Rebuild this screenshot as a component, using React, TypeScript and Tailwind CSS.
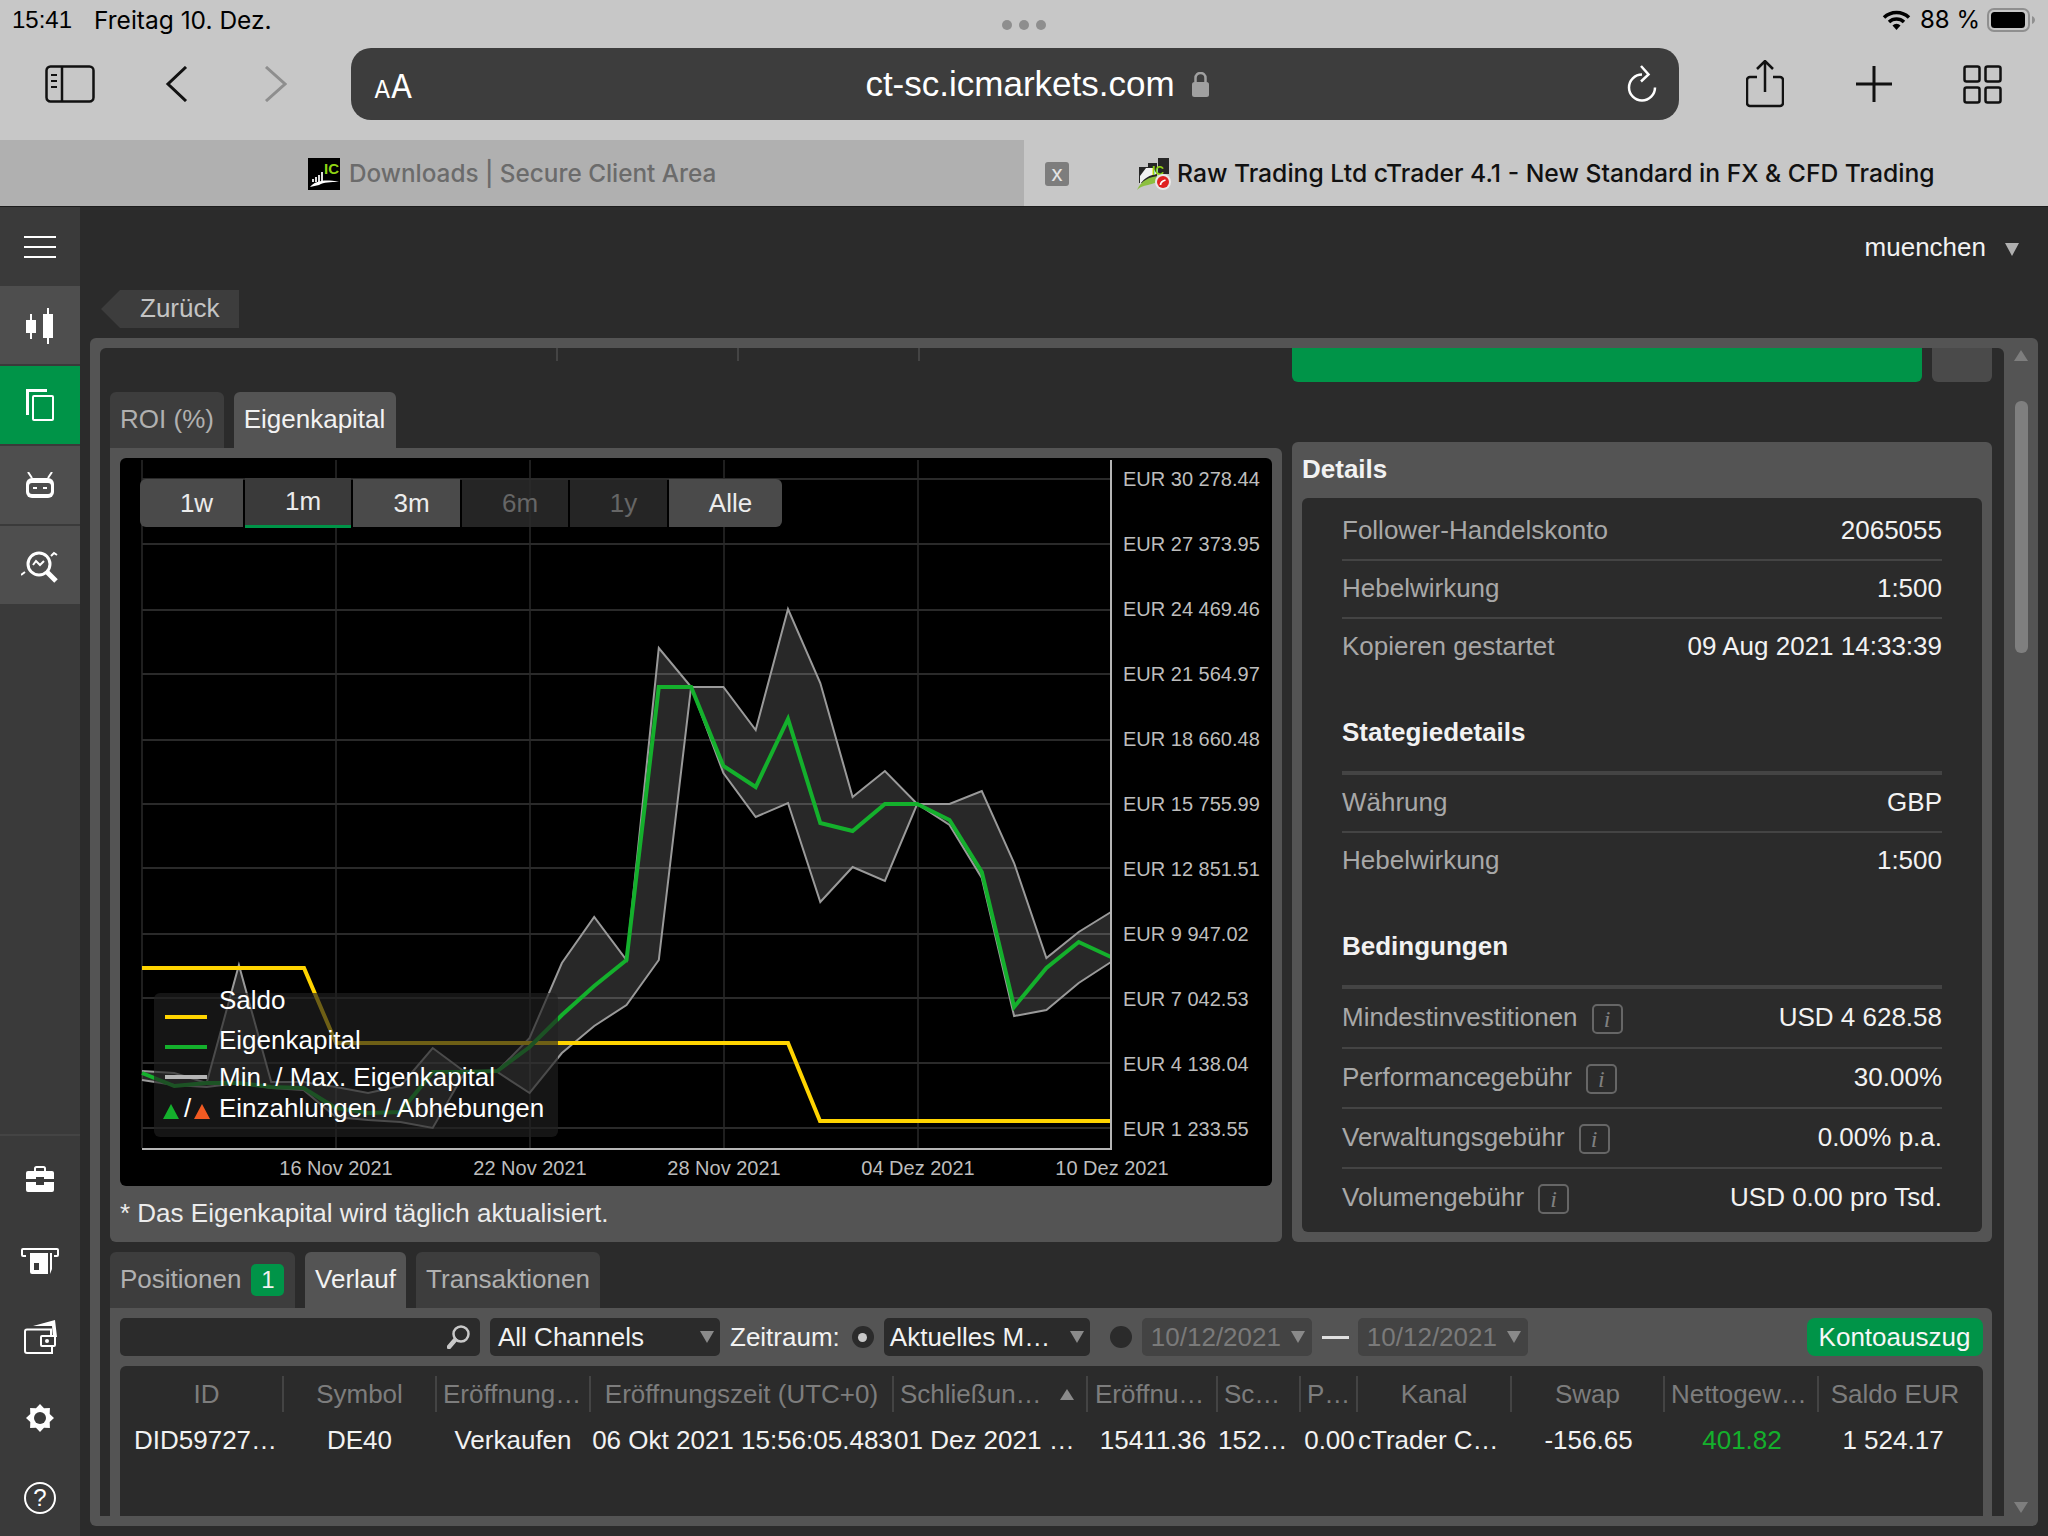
import React from 'react';

const CHROME = { fontFamily: 'Inter, "Liberation Sans", sans-serif' };
const PAGE = { fontFamily: '"Liberation Sans", Arial, sans-serif' };

const equity = [1073, 1086, 1083, 1083, 1087, 1088, 1108, 1113, 1112, 1072, 1072, 1071, 1047, 1015, 986, 960, 687, 687, 766, 787, 719, 823, 831, 804, 804, 820, 872, 1007, 968, 942, 957];
const maxEq = [1071, 1073, 1083, 965, 1082, 1082, 1087, 1093, 1086, 1048, 1072, 1071, 1038, 963, 917, 960, 648, 687, 687, 730, 609, 683, 797, 771, 804, 804, 791, 863, 958, 932, 912];
const minEq = [1080, 1085, 1087, 1083, 1088, 1090, 1117, 1120, 1122, 1128, 1072, 1072, 1093, 1053, 1026, 1005, 960, 687, 773, 817, 803, 902, 867, 881, 804, 825, 878, 1016, 1010, 983, 962];

const px = (k: number) => 142 + 32.3 * k;
const line = (ys: number[]) => ys.map((y, k) => `${px(k)},${y}`).join(' ');
const band = line(maxEq) + ' ' + minEq.map((y, k) => `${px(k)},${y}`).reverse().join(' ');

const gridY = [479, 544, 610, 674, 740, 804, 868, 934, 998, 1063, 1128];
const gridX = [142, 336, 530, 724, 918];

const yLabels = ['EUR 30 278.44', 'EUR 27 373.95', 'EUR 24 469.46', 'EUR 21 564.97', 'EUR 18 660.48', 'EUR 15 755.99', 'EUR 12 851.51', 'EUR 9 947.02', 'EUR 7 042.53', 'EUR 4 138.04', 'EUR 1 233.55'];
const xLabels = ['16 Nov 2021', '22 Nov 2021', '28 Nov 2021', '04 Dez 2021', '10 Dez 2021'];

const ranges = [
  { label: '1w', w: 'w-[103px]', cls: 'bg-[#4a4a4a] text-[#ececec] rounded-l-md' },
  { label: '1m', w: 'w-[106px]', cls: 'bg-[#3a3a3a] text-[#ececec] border-b-[3px] border-[#009448] h-[50px] -mt-[1px]' },
  { label: '3m', w: 'w-[107px]', cls: 'bg-[#4a4a4a] text-[#ececec]' },
  { label: '6m', w: 'w-[106px]', cls: 'bg-[#2b2b2b]/85 text-[#666666]' },
  { label: '1y', w: 'w-[97px]', cls: 'bg-[#2b2b2b]/85 text-[#666666]' },
  { label: 'Alle', w: 'w-[113px]', cls: 'bg-[#4a4a4a] text-[#ececec] rounded-r-md' },
];

const columns = 'grid grid-cols-[153px_153px_154px_303px_194px_130px_83px_57px_154px_153px_154px_154px]';

const headers = [
  { t: 'ID' },
  { t: 'Symbol' },
  { t: 'Eröffnung…', left: 'pl-[6px]' },
  { t: 'Eröffnungszeit (UTC+0)' },
  { t: 'Schließun…', left: 'pl-[6px]', sort: true },
  { t: 'Eröffnu…', left: 'pl-[7px]' },
  { t: 'Sc…', left: 'pl-[6px]' },
  { t: 'P…', left: 'pl-[6px]' },
  { t: 'Kanal' },
  { t: 'Swap' },
  { t: 'Nettogew…', left: 'pl-[6px]' },
  { t: 'Saldo EUR', cls: 'pr-[2px]' },
];

const cells = [
  { t: 'DID59727…', left: 'pl-[3px]' },
  { t: 'DE40', cls: 'pr-[2px]' },
  { t: 'Verkaufen', cls: 'pr-[2px]' },
  { t: '06 Okt 2021 15:56:05.483' },
  { t: '01 Dez 2021 …', left: 'pl-0' },
  { t: '15411.36' },
  { t: '152…', left: 'pl-0' },
  { t: '0.00' },
  { t: 'cTrader C…', left: 'pl-0' },
  { t: '-156.65' },
  { t: '401.82', cls: 'text-[#14b02c]' },
  { t: '1 524.17', cls: 'pr-[6px]' },
];

function Caret({ color = 'border-t-[#8a8a8a]' }: { color?: string }) {
  return <span className={`block h-0 w-0 border-x-[7px] border-t-[12px] border-x-transparent ${color}`} />;
}

function InfoBox() {
  return (
    <span className="ml-[14px] mt-[3px] flex h-[30px] w-[31px] items-center justify-center rounded-[5px] border-2 border-[#666666] text-[24px] italic text-[#808080]" style={{ fontFamily: '"Liberation Serif", serif' }}>
      i
    </span>
  );
}

function Row({ label, value, info, tall, last }: { label: string; value: string; info?: boolean; tall?: boolean; last?: boolean }) {
  return (
    <div className={`flex items-center justify-between ${tall ? 'h-[58px]' : 'h-[56px]'} ${last ? '' : 'box-content border-b-2 border-[#444444]'}`}>
      <span className="flex -translate-y-[1px] items-center text-[#a8a8a8]">
        {label}
        {info && <InfoBox />}
      </span>
      <span className="-translate-y-[1px] text-[#f2f2f2]">{value}</span>
    </div>
  );
}

function SidebarToggleIcon() {
  return (
    <svg width="50" height="38" viewBox="0 0 50 38" fill="none" stroke="#111" strokeWidth="2.5">
      <rect x="1.5" y="1.5" width="47" height="35" rx="4" />
      <path d="M17 1.5v35" />
      <path d="M6 10h6M6 16h6M6 22h6" strokeWidth="2" />
    </svg>
  );
}

function CandlesIcon() {
  return (
    <svg width="28" height="36" viewBox="0 0 28 36" fill="#fff" className="mt-[2px]">
      <rect x="0" y="12" width="10" height="13" />
      <rect x="4" y="6" width="2" height="25" />
      <rect x="17" y="6" width="10" height="24" />
      <rect x="21" y="0" width="2" height="36" />
    </svg>
  );
}

function CopyIcon() {
  return (
    <svg width="28" height="32" viewBox="0 0 28 32" fill="none" stroke="#fff">
      <path d="M1.5 26V1.5H21" strokeWidth="3" />
      <rect x="7" y="7" width="20" height="24" strokeWidth="2" rx="1" />
    </svg>
  );
}

function RobotIcon() {
  return (
    <svg width="28" height="26" viewBox="0 0 28 26">
      <path d="M2 0l4 6M26 0l-4 6" stroke="#fff" strokeWidth="2" />
      <rect x="0" y="6" width="28" height="20" rx="6" fill="#fff" />
      <rect x="3" y="11" width="22" height="11" rx="3" fill="#4e4e4e" />
      <path d="M7 16h4M17 16h4" stroke="#fff" strokeWidth="2" />
    </svg>
  );
}

function ChartSearchIcon() {
  return (
    <svg width="38" height="32" viewBox="0 0 38 32" fill="none" stroke="#fff" className="mt-[4px]">
      <circle cx="18" cy="13" r="11" strokeWidth="3" />
      <path d="M12 14l3-4 4 4 4-4" strokeWidth="2" />
      <path d="M26 21l9 9" strokeWidth="5" />
      <path d="M0 24l4-3M30 5l3-3 3 2" strokeWidth="2" />
    </svg>
  );
}

function BriefcaseIcon() {
  return (
    <svg width="28" height="26" viewBox="0 0 28 26" fill="#fff">
      <path d="M9 5V2.500A1.500 1.500 0 0 1 10.500 1h7A1.500 1.500 0 0 1 19 2.500V5" fill="none" stroke="#fff" strokeWidth="2" />
      <path d="M2 5h24a2 2 0 0 1 2 2v6H18v-2h-8v2H0V7a2 2 0 0 1 2-2z" />
      <path d="M0 16h10v3h8v-3h10v8a2 2 0 0 1-2 2H2a2 2 0 0 1-2-2z" />
    </svg>
  );
}

function AtmIcon() {
  return (
    <svg width="38" height="26" viewBox="0 0 38 26">
      <path d="M5 8H2a1 1 0 0 1-1-1V2a1 1 0 0 1 1-1h34a1 1 0 0 1 1 1v5a1 1 0 0 1-1 1h-3" fill="none" stroke="#fff" strokeWidth="2" />
      <path d="M9 5h18v21H11a2 2 0 0 1-2-2z" fill="#fff" />
      <rect x="13" y="15" width="5" height="7" fill="#3a3a3a" />
      <path d="M29 5h2v16l-2 5z" fill="#fff" />
    </svg>
  );
}

function WalletIcon() {
  return (
    <svg width="33" height="34" viewBox="0 0 33 34" fill="none">
      <path d="M9 6L31 0l2 17h-4l-1-11z" fill="#fff" />
      <path d="M27 15V9.500H3A2 2 0 0 0 1 11.500V31a2 2 0 0 0 2 2h25v-7" stroke="#fff" strokeWidth="2" />
      <rect x="17" y="16" width="14" height="10" rx="1" stroke="#fff" strokeWidth="2" />
      <circle cx="23" cy="21" r="2" fill="#fff" />
    </svg>
  );
}

const gearPoints = Array.from({ length: 16 }, (_, i) => {
  const r = i % 2 === 0 ? 14 : 10.5;
  const a = (i * Math.PI) / 8 - Math.PI / 2;
  return `${14 + r * Math.cos(a)},${14 + r * Math.sin(a)}`;
}).join(' ');

function GearIcon() {
  return (
    <svg width="28" height="28" viewBox="0 0 28 28">
      <polygon points={gearPoints} fill="#fff" />
      <circle cx="14" cy="14" r="6" fill="#3a3a3a" />
    </svg>
  );
}

function WifiIcon() {
  return (
    <svg width="29" height="20" viewBox="0 0 29 20" fill="none" stroke="#000" strokeWidth="3.500">
      <path d="M2 7.500a18 18 0 0 1 25 0" />
      <path d="M7 12a11 11 0 0 1 15 0" />
      <path d="M14.500 20l-4-4.500a5.500 5.500 0 0 1 8 0z" fill="#000" stroke="none" />
    </svg>
  );
}

function Battery() {
  return (
    <svg width="48" height="24" viewBox="0 0 48 24">
      <rect x="1" y="1" width="41" height="22" rx="6" fill="none" stroke="#8f8f8f" strokeWidth="2" />
      <rect x="4" y="4" width="34" height="16" rx="3.500" fill="#000" />
      <path d="M45 8c2 1 3 2.500 3 4s-1 3-3 4z" fill="#8f8f8f" />
    </svg>
  );
}

function IcFavicon() {
  return (
    <svg width="32" height="32" viewBox="0 0 32 32">
      <rect width="32" height="32" fill="#000" />
      <path d="M4 21h2v3H4zM7 19h2v5H7zM10 17h2v7h-2zM13 14h2v9h-2z" fill="#ddd" />
      <path d="M2 29c5-6 14-8 29-5-9 0-15 0-20 3z" fill="#fff" />
      <text x="16" y="16" fontSize="15" fontWeight="700" fill="#8fd414" style={PAGE}>IC</text>
    </svg>
  );
}

function TraderFavicon() {
  return (
    <svg width="34" height="32" viewBox="0 0 34 32">
      <path d="M2 9h9v16H2zM11 5h9v16h-9zM21 0h11v16H21z" fill="#262626" />
      <path d="M0 32c4-9 12-14 24-14 0 6-9 8-13 9-5 1-8 2-11 5z" fill="#8cbf3f" />
      <path d="M3 26c5-6 9-9 17-10l-4-6H9l-6 8z" fill="#f2f2f2" />
      <text x="15" y="17" fontSize="12" fontWeight="700" fill="#8fd414" style={PAGE}>IC</text>
      <circle cx="26" cy="24" r="8" fill="#e8e8e8" />
      <circle cx="26" cy="24" r="6" fill="#e02020" />
      <path d="M23.500 27c0-2.500 1.500-4 5-5" stroke="#fff" strokeWidth="1.800" fill="none" />
    </svg>
  );
}

function Chart() {
  return (
    <div className="relative flex h-[728px] w-[1152px] rounded-md bg-black">
      <div className="relative w-[992px]">
        <svg width="992" height="692" viewBox="120 458 992 692" className="block" fill="none">
          {gridY.map((y) => (
            <line key={y} x1="142" x2="1111" y1={y} y2={y} stroke="#2a2a2a" strokeWidth="2" />
          ))}
          {gridX.map((x) => (
            <line key={x} x1={x} x2={x} y1="460" y2="1148" stroke="#2a2a2a" strokeWidth="1.500" />
          ))}
          <polygon points={band} fill="#ffffff" fillOpacity="0.155" />
          <polyline points={line(maxEq)} stroke="#9a9a9a" strokeWidth="2" />
          <polyline points={line(minEq)} stroke="#9a9a9a" strokeWidth="2" />
          <polyline points="142,968 304,968 336,1043 788,1043 820,1121 1111,1121" stroke="#ffd400" strokeWidth="4" />
          <polyline points={line(equity)} stroke="#14b02c" strokeWidth="4" />
          <line x1="142" x2="1112" y1="1149" y2="1149" stroke="#b5b5b5" strokeWidth="2" />
          <line x1="1111" x2="1111" y1="460" y2="1150" stroke="#b5b5b5" strokeWidth="2" />
        </svg>

        <div className="flex pl-[119px] text-[20px] leading-[36px] text-[#bdbdbd]">
          {xLabels.map((l) => (
            <span key={l} className="w-[194px] shrink-0 whitespace-nowrap text-center">{l}</span>
          ))}
        </div>

        <div className="absolute left-[20px] top-[21px] flex items-start gap-[2px] text-[26px]">
          {ranges.map((r) => (
            <span key={r.label} className={`flex h-[48px] items-center justify-center pl-[10px] ${r.w} ${r.cls}`}>{r.label}</span>
          ))}
        </div>

        <div className="absolute left-[34px] top-[535px] flex h-[144px] w-[404px] flex-col rounded-md bg-[#202020]/65 text-[26px] leading-[30px] text-white">
          <div className="-mt-[8px] flex h-[30px] items-center pl-[11px]">
            <span className="h-[4px] w-[42px] translate-y-[17px] bg-[#ffd400]" />
            <span className="ml-[12px]">Saldo</span>
          </div>
          <div className="mt-[10px] flex h-[30px] items-center pl-[11px]">
            <span className="h-[4px] w-[42px] translate-y-[7px] bg-[#14b02c]" />
            <span className="ml-[12px]">Eigenkapital</span>
          </div>
          <div className="mt-[7px] flex h-[30px] items-center pl-[11px]">
            <span className="h-[4px] w-[42px] bg-[#b5b5b5]" />
            <span className="ml-[12px]">Min. / Max. Eigenkapital</span>
          </div>
          <div className="mt-[1px] flex h-[30px] items-center pl-[9px]">
            <span className="flex w-[56px] items-center">
              <span className="block h-0 w-0 translate-y-[3px] border-x-[8px] border-b-[15px] border-x-transparent border-b-[#14b02c]" />
              <span className="ml-[5px] mr-[3px] w-[7px]">/</span>
              <span className="block h-0 w-0 translate-y-[3px] border-x-[8px] border-b-[15px] border-x-transparent border-b-[#f05a22]" />
            </span>
            <span>Einzahlungen / Abhebungen</span>
          </div>
        </div>
      </div>

      <div className="ml-[11px] flex h-[683px] flex-col justify-between pt-[9px] text-[20px] leading-[24px] text-[#bdbdbd]">
        {yLabels.map((l) => (
          <span key={l} className="whitespace-nowrap">{l}</span>
        ))}
      </div>
    </div>
  );
}

function Table() {
  return (
    <div className="ml-[10px] mt-[10px] h-[150px] w-[1863px] rounded-t-md bg-[#2b2b2b] pl-[11px] pt-[10px]">
      <div className={`${columns} h-[36px] text-[#7d7d7d]`}>
        {headers.map((h, i) => (
          <div key={i} className={`flex h-[36px] items-center whitespace-nowrap leading-none ${i < headers.length - 1 ? 'border-r-2 border-[#444444]' : ''} ${h.left ? `${h.left} justify-start` : 'justify-center'} ${h.cls ?? ''}`}>
            {h.t}
            {h.sort && <span className="ml-auto mr-[12px] h-0 w-0 border-x-[7px] border-b-[11px] border-x-transparent border-b-[#8a8a8a]" />}
          </div>
        ))}
      </div>
      <div className={`${columns} h-[56px] text-[#f2f2f2]`}>
        {cells.map((c, i) => (
          <div key={i} className={`flex items-center whitespace-nowrap ${c.left ? `${c.left} justify-start` : 'justify-center'} ${c.cls ?? ''}`}>
            {c.t}
          </div>
        ))}
      </div>
    </div>
  );
}

export default function App() {
  return (
    <div className="flex h-[1536px] w-[2048px] flex-col overflow-hidden bg-[#2b2b2b]" style={PAGE}>
      {/* Safari chrome */}
      <div className="h-[140px] bg-[#c7c7c7] text-black" style={CHROME}>
        <div className="grid h-[48px] grid-cols-3 text-[24px]">
          <div className="flex h-[40px] items-center pl-[12px]">
            <span style={PAGE}>15:41</span>
            <span className="ml-[22px] text-[24.5px]">Freitag 10. Dez.</span>
          </div>
          <div className="flex items-start justify-center gap-[7px] pt-[20px]">
            <span className="h-[10px] w-[10px] rounded-full bg-[#8e8e8e]" />
            <span className="h-[10px] w-[10px] rounded-full bg-[#8e8e8e]" />
            <span className="h-[10px] w-[10px] rounded-full bg-[#8e8e8e]" />
          </div>
          <div className="flex h-[40px] items-center justify-end pr-[13px]">
            <WifiIcon />
            <span className="ml-[9px]">88 %</span>
            <span className="ml-[7px]"><Battery /></span>
          </div>
        </div>
        <div className="flex h-[72px] items-center">
          <span className="ml-[45px]"><SidebarToggleIcon /></span>
          <svg className="ml-[70px]" width="24" height="36" viewBox="0 0 24 36" fill="none" stroke="#111" strokeWidth="3"><path d="M21 1L3 18l18 17" /></svg>
          <svg className="ml-[74px]" width="24" height="36" viewBox="0 0 24 36" fill="none" stroke="#8e8e8e" strokeWidth="3"><path d="M3 1l19 17L3 35" /></svg>
          <div className="relative ml-[64px] flex h-[72px] w-[1328px] items-center justify-center rounded-[20px] bg-[#3d3d3d] text-[35px] text-white">
            <span className="absolute left-[23px] top-[11px]"><span className="text-[24px]">A</span><span className="text-[32px]">A</span></span>
            <span className="ml-[44px]" style={PAGE}>ct-sc.icmarkets.com</span>
            <svg className="ml-[17px]" width="17" height="25" viewBox="0 0 17 25" fill="#a0a0a0">
              <path d="M3.500 10V6a5 5 0 0 1 10 0v4" fill="none" stroke="#a0a0a0" strokeWidth="2.500" />
              <rect x="0" y="10" width="17" height="15" rx="2.500" />
            </svg>
            <svg className="absolute right-[22px] top-[17px]" width="30" height="38" viewBox="0 0 30 38" fill="none" stroke="#fff" strokeWidth="2.500">
              <path d="M15 9.500A13 13 0 1 0 28 22.500" />
              <path d="M14 1l7.500 8.500L14 16.500" />
            </svg>
          </div>
          <svg className="ml-[67px]" width="38" height="48" viewBox="0 0 38 48" fill="none" stroke="#111" strokeWidth="2.500">
            <path d="M11 17H4a3 3 0 0 0-3 3v23a3 3 0 0 0 3 3h30a3 3 0 0 0 3-3V20a3 3 0 0 0-3-3h-7" />
            <path d="M19 32V2M11 9l8-8 8 8" />
          </svg>
          <svg className="ml-[72px]" width="36" height="36" viewBox="0 0 36 36" stroke="#111" strokeWidth="3"><path d="M18 0v36M0 18h36" /></svg>
          <svg className="ml-[71px]" width="39" height="39" viewBox="0 0 39 39" fill="none" stroke="#111" strokeWidth="2.500">
            <rect x="1.500" y="1.500" width="15" height="15" rx="2" />
            <rect x="22.500" y="1.500" width="15" height="15" rx="2" />
            <rect x="1.500" y="22.500" width="15" height="15" rx="2" />
            <rect x="22.500" y="22.500" width="15" height="15" rx="2" />
          </svg>
        </div>
      </div>

      <div className="flex h-[67px] border-b border-[#1d1d1d] font-medium" style={CHROME}>
        <div className="flex w-[1024px] items-center bg-[#b0b0b0] pl-[308px] pt-[1px] text-[24.3px] text-[#6b6b6b]">
          <IcFavicon />
          <span className="ml-[9px] whitespace-nowrap">Downloads | Secure Client Area</span>
        </div>
        <div className="flex flex-1 items-center bg-[#c7c7c7] pt-[1px] text-[24.7px] text-[#111111]">
          <span className="ml-[21px] flex h-[24px] w-[24px] items-center justify-center rounded-[3px] bg-[#7d7d7d] pb-[2px] text-[22px] font-normal leading-none text-[#e4e4e4]">x</span>
          <span className="ml-[68px]"><TraderFavicon /></span>
          <span className="ml-[6px] whitespace-nowrap">Raw Trading Ltd cTrader 4.1 - New Standard in FX &amp; CFD Trading</span>
        </div>
      </div>

      <div className="flex flex-1 text-[26px]">
        {/* left rail */}
        <aside className="flex h-[1329px] w-[80px] flex-col bg-[#3a3a3a]">
          <div className="flex h-[79px] flex-col items-center justify-center gap-[8px]">
            <span className="h-[2px] w-[32px] bg-white" />
            <span className="h-[2px] w-[32px] bg-white" />
            <span className="h-[2px] w-[32px] bg-white" />
          </div>
          <div className="flex flex-col gap-[2px]">
            <div className="flex h-[78px] items-center justify-center bg-[#4e4e4e]"><CandlesIcon /></div>
            <div className="flex h-[78px] items-center justify-center bg-[#009448]"><CopyIcon /></div>
            <div className="flex h-[78px] items-center justify-center bg-[#4e4e4e]"><RobotIcon /></div>
            <div className="flex h-[78px] items-center justify-center bg-[#4e4e4e]"><ChartSearchIcon /></div>
          </div>
          <div className="mt-auto h-[2px] bg-[#444444]" />
          <div className="flex h-[86px] items-center justify-center"><BriefcaseIcon /></div>
          <div className="flex h-[78px] items-center justify-center"><AtmIcon /></div>
          <div className="flex h-[74px] items-center justify-center"><WalletIcon /></div>
          <div className="flex h-[88px] items-center justify-center"><GearIcon /></div>
          <div className="flex h-[72px] items-center justify-center">
            <span className="flex h-[32px] w-[32px] items-center justify-center rounded-full border-2 border-white text-[24px] text-white">?</span>
          </div>
          <div className="h-[2px]" />
        </aside>

        <main className="flex w-[1968px] flex-col">
          <div className="flex h-[83px] items-start justify-end pr-[29px] pt-[25px] text-[#f2f2f2]">
            <span className="leading-[30px]">muenchen</span>
            <span className="ml-[19px] mt-[11px] block h-0 w-0 border-x-[7px] border-t-[13px] border-x-transparent border-t-[#b0b0b0]" />
          </div>
          <div className="ml-[21px] flex h-[38px] w-[138px] items-center">
            <span className="h-0 w-0 border-y-[19px] border-r-[19px] border-y-transparent border-r-[#3d3d3d]" />
            <span className="flex h-[38px] flex-1 items-center bg-[#3d3d3d] pb-[2px] pl-[20px] text-[#c4c4c4]">Zurück</span>
          </div>

          <div className="ml-[10px] mt-[10px] flex h-[1188px] w-[1948px] rounded-md bg-[#545454] pt-[10px]">
            <div className="ml-[10px] h-[1168px] w-[1904px] overflow-hidden rounded-t-md bg-[#2b2b2b]">
              <div className="flex h-[34px] items-start">
                <span className="ml-[456px] h-[13px] w-[2px] bg-[#444444]" />
                <span className="ml-[179px] h-[13px] w-[2px] bg-[#444444]" />
                <span className="ml-[179px] h-[13px] w-[2px] bg-[#444444]" />
                <span className="ml-[372px] h-[34px] w-[630px] rounded-b-md bg-[#009448]" />
                <span className="ml-[10px] h-[34px] w-[60px] rounded-b-md bg-[#4a4a4a]" />
              </div>

              <div className="ml-[10px] mt-[10px] flex gap-[10px]">
                <div className="w-[1172px]">
                  <div className="flex h-[56px] gap-[10px]">
                    <span className="flex w-[114px] items-center justify-center rounded-t-md bg-[#3d3d3d] pb-[2px] text-[#b0b0b0]">ROI (%)</span>
                    <span className="flex w-[162px] items-center justify-center rounded-t-md bg-[#545454] pb-[2px] pr-[1px] text-[#f2f2f2]">Eigenkapital</span>
                  </div>
                  <div className="h-[794px] rounded-b-md rounded-tr-md bg-[#545454] p-[10px]">
                    <Chart />
                    <p className="mt-[8px] leading-[38px] text-[#ececec]">* Das Eigenkapital wird täglich aktualisiert.</p>
                  </div>
                </div>

                <div className="mt-[50px] h-[800px] w-[700px] rounded-md bg-[#545454] px-[10px]">
                  <h2 className="flex h-[54px] items-center font-bold text-[#f2f2f2]">Details</h2>
                  <div className="mt-[2px] h-[734px] rounded-md bg-[#2b2b2b] px-[40px] pt-[5px]">
                    <Row label="Follower-Handelskonto" value="2065055" />
                    <Row label="Hebelwirkung" value="1:500" />
                    <Row label="Kopieren gestartet" value="09 Aug 2021 14:33:39" last />
                    <h3 className="flex h-[96px] items-start pt-[42px] font-bold leading-[30px] text-[#f2f2f2]">Stategiedetails</h3>
                    <div className="h-[4px] bg-[#444444]" />
                    <Row label="Währung" value="GBP" />
                    <Row label="Hebelwirkung" value="1:500" last />
                    <h3 className="flex h-[96px] items-start pt-[42px] font-bold leading-[30px] text-[#f2f2f2]">Bedingungen</h3>
                    <div className="h-[4px] bg-[#444444]" />
                    <Row label="Mindestinvestitionen" value="USD 4 628.58" info tall />
                    <Row label="Performancegebühr" value="30.00%" info tall />
                    <Row label="Verwaltungsgebühr" value="0.00% p.a." info tall />
                    <Row label="Volumengebühr" value="USD 0.00 pro Tsd." info tall last />
                  </div>
                </div>
              </div>

              <div className="ml-[10px] mt-[10px] flex h-[56px]">
                <span className="flex w-[185px] items-center rounded-t-md bg-[#3d3d3d] pb-[2px] pl-[10px] text-[#b0b0b0]">
                  Positionen
                  <span className="ml-[10px] mt-[2px] flex h-[32px] w-[33px] items-center justify-center rounded-[5px] bg-[#009448] text-[24px] text-[#f2f2f2]">1</span>
                </span>
                <span className="ml-[10px] flex w-[101px] items-center justify-center rounded-t-md bg-[#545454] pb-[2px] text-[#f2f2f2]">Verlauf</span>
                <span className="ml-[10px] flex w-[184px] items-center justify-center rounded-t-md bg-[#3d3d3d] pb-[2px] text-[#b0b0b0]">Transaktionen</span>
              </div>

              <div className="ml-[10px] h-[208px] w-[1882px] overflow-hidden rounded-tr-md bg-[#545454] pt-[10px]">
                <div className="flex h-[38px] items-center pl-[10px]">
                  <div className="flex h-[38px] w-[360px] items-center justify-end rounded-[5px] bg-[#2b2b2b] pr-[10px]">
                    <svg width="23" height="24" viewBox="0 0 23 24" fill="none" stroke="#c8c8c8">
                      <circle cx="14" cy="9" r="7.500" strokeWidth="2.500" />
                      <path d="M8 15l-6 7" strokeWidth="4.500" strokeLinecap="round" />
                    </svg>
                  </div>
                  <div className="ml-[10px] flex h-[38px] w-[230px] items-center justify-between rounded-[5px] bg-[#2b2b2b] pl-[8px] pr-[6px] text-[#f2f2f2]">
                    All Channels
                    <Caret />
                  </div>
                  <span className="ml-[10px] text-[#f2f2f2]">Zeitraum:</span>
                  <span className="ml-[12px] flex h-[22px] w-[22px] items-center justify-center rounded-full bg-[#2b2b2b]"><span className="h-[9px] w-[9px] rounded-full bg-[#c8c8c8]" /></span>
                  <div className="ml-[10px] flex h-[38px] w-[206px] items-center justify-between rounded-[5px] bg-[#2b2b2b] pl-[6px] pr-[6px] text-[#f2f2f2]">
                    Aktuelles M…
                    <Caret />
                  </div>
                  <span className="ml-[20px] h-[22px] w-[22px] rounded-full bg-[#2b2b2b]" />
                  <div className="ml-[10px] flex h-[38px] w-[170px] items-center justify-between rounded-[5px] bg-[#434343] pl-[9px] pr-[7px] text-[#7a7a7a]">
                    10/12/2021
                    <Caret />
                  </div>
                  <span className="ml-[10px] h-[3px] w-[27px] bg-[#e0e0e0]" />
                  <div className="ml-[9px] flex h-[38px] w-[170px] items-center justify-between rounded-[5px] bg-[#434343] pl-[9px] pr-[7px] text-[#7a7a7a]">
                    10/12/2021
                    <Caret />
                  </div>
                  <span className="ml-auto mr-[9px] flex h-[38px] w-[176px] items-center justify-center rounded-[8px] bg-[#009448] pr-[1px] text-[#f7f7f7]">Kontoauszug</span>
                </div>
                <Table />
              </div>
            </div>

            <div className="flex h-[1168px] w-[34px] flex-col items-center pt-[2px]">
              <span className="block h-0 w-0 border-x-[7px] border-b-[11px] border-x-transparent border-b-[#7e7e7e]" />
              <span className="mt-[40px] h-[252px] w-[13px] rounded-b-md rounded-t-md bg-[#7f7f7f]" />
              <span className="mb-[3px] mt-auto block h-0 w-0 border-x-[7px] border-t-[11px] border-x-transparent border-t-[#7e7e7e]" />
            </div>
          </div>
        </main>
      </div>
    </div>
  );
}
